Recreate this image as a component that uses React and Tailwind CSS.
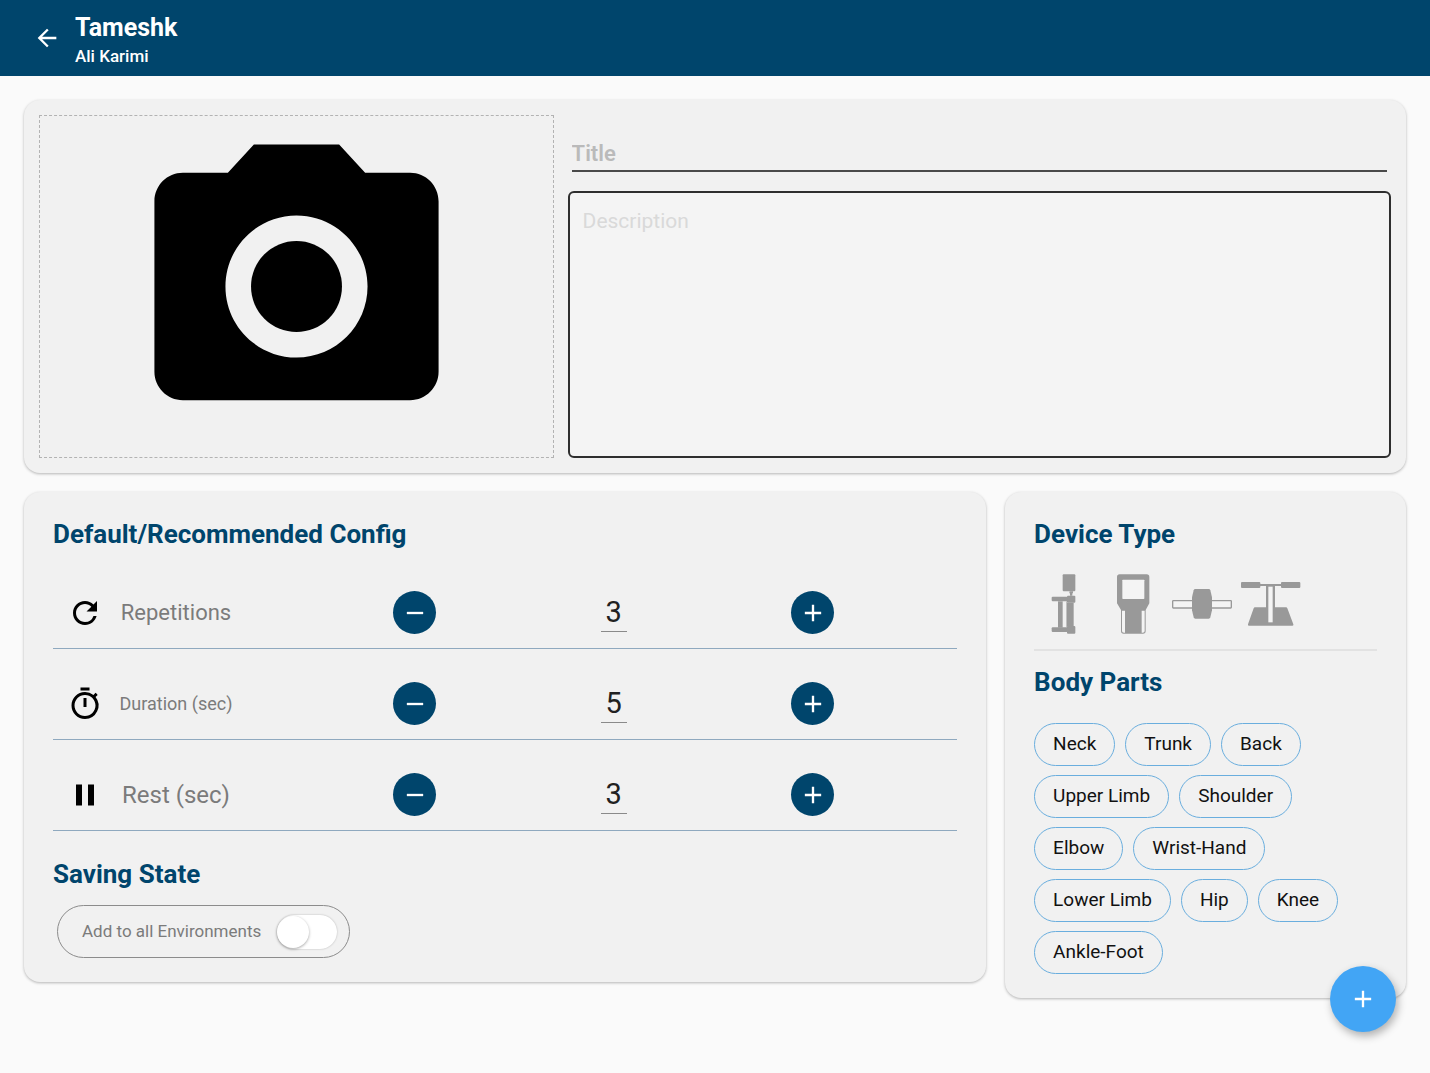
import React, { useState } from "react";
import { MdArrowBack, MdRefresh, MdOutlineTimer, MdPause, MdAdd, MdRemove, MdCameraAlt } from "react-icons/md";

const card = "rounded-2xl bg-[#f1f1f1] shadow-[0_1px_3px_rgba(0,0,0,0.28)]";
const heading = "text-[26px] leading-8 font-bold text-[#00456c]";

const deviceTypes = [
  {
    name: "Column device",
    art: (
      <g>
        <rect x="86" y="1" width="38" height="51" rx="3" />
        <path d="M107 52h10v4l-2 3v6h-7v-6l-2-3z" />
        <rect x="99" y="65" width="25" height="21" rx="3" />
        <rect x="53" y="68" width="48" height="14" rx="3" />
        <rect x="72" y="82" width="14" height="79" />
        <rect x="99" y="86" width="20" height="72" />
        <rect x="53" y="160" width="48" height="14" rx="3" />
        <rect x="99" y="156" width="25" height="23" rx="3" />
        <path d="M98 82v78" stroke="#999" strokeWidth="2" />
      </g>
    ),
  },
  {
    name: "Handheld device",
    art: (
      <g>
        <path d="M50 1h81q8 0 8 8v79l-11 20v63q0 8-8 8H62q-8 0-8-8v-63L42 88V9q0-8 8-8z" />
        <rect x="58" y="17" width="66" height="58" rx="2" fill="#f4f4f4" />
        <path d="M57 110h9v66h-3q-6 0-6-5z" fill="#f4f4f4" />
        <path d="M116 110h9v61q0 5-6 5h-3z" fill="#f4f4f4" />
      </g>
    ),
  },
  {
    name: "Bar device",
    art: (
      <g>
        <rect x="2" y="80" width="176" height="22" rx="2" fill="#f4f4f4" stroke="#999" strokeWidth="4" />
        <path d="M70 45h40q4 0 5 4l5 21v39l-5 21q-1 4-5 4H70q-4 0-5-4l-5-21V70l5-21q1-4 5-4z" />
      </g>
    ),
  },
  {
    name: "Platform device",
    art: (
      <g>
        <path d="M42 100h93q3 0 4 3l18 48q1 4-3 4H24q-4 0-3-4l17-48q1-3 4-3z" />
        <rect x="55" y="30" width="68" height="6" />
        <rect x="75" y="34" width="27" height="113" />
        <rect x="82" y="38" width="13" height="107" fill="#f4f4f4" />
        <rect x="0" y="24" width="58" height="18" rx="3" />
        <rect x="120" y="24" width="58" height="18" rx="3" />
      </g>
    ),
  },
];

const bodyParts = [
  "Neck", "Trunk", "Back", "Upper Limb", "Shoulder", "Elbow",
  "Wrist-Hand", "Lower Limb", "Hip", "Knee", "Ankle-Foot",
];

function RoundButton({ label, onClick, children }) {
  return (
    <button
      type="button"
      aria-label={label}
      onClick={onClick}
      className="flex size-[43px] items-center justify-center justify-self-center rounded-full bg-[#00456c] text-[28px] text-white"
    >
      {children}
    </button>
  );
}

function ConfigRow({ id, icon, label, labelSize, initial }) {
  const [value, setValue] = useState(initial);
  return (
    <div className="grid grid-cols-[64px_198px_1fr_1fr_1fr] items-center border-b border-[#8fa9bf] pt-[33px] pr-[45px] pb-[14px]">
      <span className="justify-self-center text-4xl text-black">{icon}</span>
      <label htmlFor={id} className={`w-[118px] text-center leading-7 whitespace-nowrap text-[#7b7b7b] ${labelSize}`}>
        {label}
      </label>
      <RoundButton label={`Decrease ${label}`} onClick={() => setValue(Math.max(0, value - 1))}>
        <MdRemove />
      </RoundButton>
      <input
        id={id}
        value={value}
        inputMode="numeric"
        onChange={(e) => setValue(Number(e.target.value) || 0)}
        className="h-[38px] w-[26px] justify-self-center border-b border-[#8a8a8a] bg-transparent text-center text-[29px] leading-8 text-[#212121] outline-none"
      />
      <RoundButton label={`Increase ${label}`} onClick={() => setValue(value + 1)}>
        <MdAdd />
      </RoundButton>
    </div>
  );
}

export default function App() {
  return (
    <div className="min-h-screen bg-[#fafafa] font-['Roboto',sans-serif] text-black">
      <header className="flex h-[76px] items-center gap-[14px] bg-[#00456c] pl-[33px] text-white">
        <button type="button" aria-label="Back" className="text-[28px]">
          <MdArrowBack />
        </button>
        <div className="pt-[3px]">
          <h1 className="text-[25px] leading-8 font-bold">Tameshk</h1>
          <p className="text-[17px] leading-6 font-medium">Ali Karimi</p>
        </div>
      </header>

      <main className="flex flex-col gap-[19px] p-6">
        <section className={`${card} grid grid-cols-[5fr_8fr] gap-[14px] p-[15px]`}>
          <button
            type="button"
            aria-label="Add photo"
            className="flex items-center justify-center border border-dashed border-[#b3b3b3]"
          >
            <MdCameraAlt className="size-[341px]" />
          </button>
          <div className="flex flex-col">
            <input
              aria-label="Title"
              placeholder="Title"
              className="mx-1 mt-5 h-[37px] border-b-2 border-[#4a4a4a] bg-transparent pt-[2px] text-[22px] font-semibold outline-none placeholder:text-[#bababa]"
            />
            <textarea
              aria-label="Description"
              placeholder="Description"
              className="mt-[19px] flex-1 resize-none rounded-md border-2 border-[#2e2e2e] bg-[#f4f4f4] px-[13px] py-[14px] text-[21px] leading-7 outline-none placeholder:text-[#d9d9d9]"
            />
          </div>
        </section>

        <div className="grid grid-cols-[12fr_5fr] items-start gap-[19px]">
          <section className={`${card} px-[29px] pt-[26px] pb-6`}>
            <h2 className={heading}>Default/Recommended Config</h2>
            <div className="mt-2">
              <ConfigRow id="repetitions" icon={<MdRefresh />} label="Repetitions" labelSize="text-[22px]" initial={3} />
              <ConfigRow id="duration" icon={<MdOutlineTimer />} label="Duration (sec)" labelSize="text-lg" initial={5} />
              <ConfigRow id="rest" icon={<MdPause />} label="Rest (sec)" labelSize="text-2xl" initial={3} />
            </div>
            <h2 className={`${heading} mt-[27px]`}>Saving State</h2>
            <label className="mt-[15px] ml-1 inline-flex h-[53px] items-center gap-4 rounded-full border border-[#8c8c8c] pr-3 pl-6 text-[17px] text-[#7b7b7b]">
              Add to all Environments
              <input type="checkbox" role="switch" className="peer sr-only" />
              <span className="flex h-[34px] w-[60px] items-center rounded-full bg-white shadow-[0_0_2px_rgba(0,0,0,0.25)] peer-checked:justify-end peer-checked:bg-[#42a5f5]">
                <span className="size-8 rounded-full bg-white shadow-[0_1px_3px_rgba(0,0,0,0.35)]" />
              </span>
            </label>
          </section>

          <section className={`${card} px-[29px] pt-[26px] pb-6`}>
            <h2 className={heading}>Device Type</h2>
            <div className="mt-6 flex gap-[9px] border-b-2 border-[#e2e2e2] pb-[15px]">
              {deviceTypes.map((d) => (
                <button key={d.name} type="button" aria-label={d.name}>
                  <svg viewBox="0 0 180 180" className="size-[60px]" fill="#999">
                    {d.art}
                  </svg>
                </button>
              ))}
            </div>
            <h2 className={`${heading} mt-[15px]`}>Body Parts</h2>
            <div className="mt-[25px] flex flex-wrap gap-x-[10px] gap-y-[9px]">
              {bodyParts.map((part) => (
                <button
                  key={part}
                  type="button"
                  className="h-[43px] rounded-full border border-[#6aaede] px-[18px] text-[19px] text-[#111]"
                >
                  {part}
                </button>
              ))}
            </div>
          </section>
        </div>
      </main>

      <button
        type="button"
        aria-label="Add"
        className="fixed right-[34px] bottom-[41px] flex size-[66px] items-center justify-center rounded-full bg-[#42a5f5] text-[28px] text-white shadow-[2px_4px_8px_rgba(0,0,0,0.3)]"
      >
        <MdAdd />
      </button>
    </div>
  );
}
